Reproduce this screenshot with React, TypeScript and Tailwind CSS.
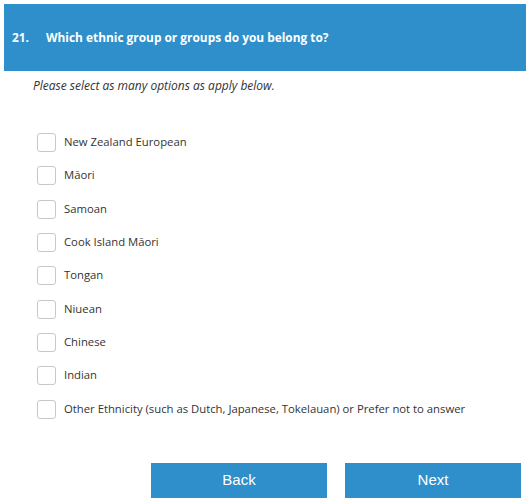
import { useState } from "react";

const options = [
  "New Zealand European",
  "Māori",
  "Samoan",
  "Cook Island Māori",
  "Tongan",
  "Niuean",
  "Chinese",
  "Indian",
  "Other Ethnicity (such as Dutch, Japanese, Tokelauan) or Prefer not to answer",
];

export default function App() {
  const [checked, setChecked] = useState<boolean[]>(options.map(() => false));

  const toggle = (i: number) =>
    setChecked((prev) => prev.map((v, j) => (j === i ? !v : v)));

  return (
    <div className="w-[526px] h-[504px] bg-white pt-[4px] pl-[4px] overflow-hidden font-['Open_Sans',sans-serif] text-[#333]">
      <div className="h-[67px] bg-[#2e8fcb] flex items-center pl-[8px] text-white text-[11.9px] font-bold">
        <span className="w-[34px]">21.</span>
        <span>Which ethnic group or groups do you belong to?</span>
      </div>
      <p className="pl-[29px] pt-[6px] text-[12px] italic leading-[18px]">
        Please select as many options as apply below.
      </p>
      <ul className="pl-[33px] pt-[31px]">
        {options.map((label, i) => (
          <li
            key={label}
            className="h-[33.3px] flex items-center gap-[8px] cursor-pointer text-[11.3px]"
            onClick={() => toggle(i)}
          >
            <span className="w-[19px] h-[19px] border border-[#c8c8c8] rounded-[3px] flex items-center justify-center text-[#2e8fcb] text-[13px]">
              {checked[i] ? "✓" : ""}
            </span>
            <span>{label}</span>
          </li>
        ))}
      </ul>
      <div className="flex gap-[18px] pl-[147px] pt-[37px]">
        <button className="w-[176px] h-[35px] bg-[#2e8fcb] text-white text-[15px] font-['Liberation_Sans',Arial,sans-serif]">
          Back
        </button>
        <button className="w-[176px] h-[35px] bg-[#2e8fcb] text-white text-[15px] font-['Liberation_Sans',Arial,sans-serif]">
          Next
        </button>
      </div>
    </div>
  );
}
